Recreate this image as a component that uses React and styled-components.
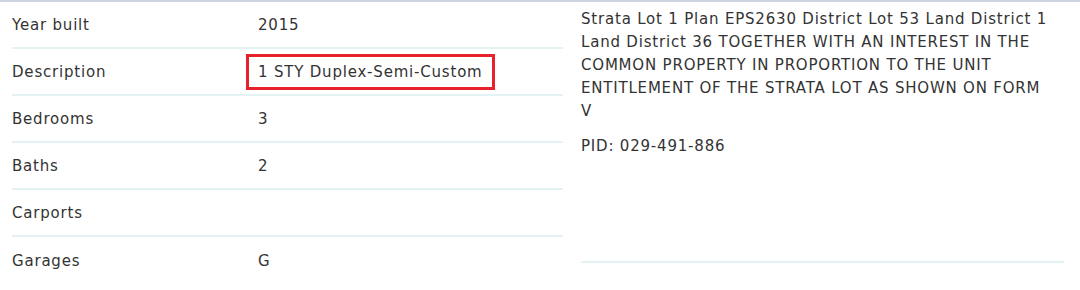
import React from "react";
import styled, { createGlobalStyle } from "styled-components";

const Global = createGlobalStyle`
  html, body {
    margin: 0;
    padding: 0;
    background: #ffffff;
  }
  body {
    font-family: "DejaVu Sans", "Noto Sans", sans-serif;
    color: #333333;
    letter-spacing: 0.8px;
    -webkit-font-smoothing: antialiased;
  }
`;

const Page = styled.div`
  border-top: 2px solid #cdd3de;
  display: grid;
  grid-template-columns: 551px 483px;
  column-gap: 18px;
  padding-left: 12px;
`;

const Table = styled.div`
  display: flex;
  flex-direction: column;
`;

const Row = styled.div`
  display: grid;
  grid-template-columns: 234px 1fr;
  align-items: center;
  height: 47px;
  box-sizing: border-box;
  border-bottom: ${(p) => (p.$last ? "none" : "2px solid #e4f2f4")};
  font-size: 15px;
`;

const Label = styled.div`
  color: #333333;
`;

const Value = styled.div`
  color: #333333;
  padding-left: 12px;
`;

const Highlight = styled.span`
  display: inline-flex;
  align-items: center;
  box-sizing: border-box;
  height: 36px;
  margin-left: -12px;
  padding: 0 9px;
  border: 3px solid #e8212a;
`;

const Legal = styled.div`
  padding-top: 6px;
  display: flex;
  flex-direction: column;
`;

const Para = styled.p`
  margin: 0 0 12px;
  max-width: 468px;
  font-size: 15px;
  line-height: 23px;
  color: #333333;
`;

const Rule = styled.div`
  margin-top: 91px;
  border-bottom: 2px solid #e4f2f4;
`;

const rows = [
  { label: "Year built", value: "2015" },
  { label: "Description", value: "1 STY Duplex-Semi-Custom", highlight: true },
  { label: "Bedrooms", value: "3" },
  { label: "Baths", value: "2" },
  { label: "Carports", value: "" },
  { label: "Garages", value: "G" },
];

export default function App() {
  return (
    <>
      <Global />
      <Page>
        <Table>
          {rows.map((r, i) => (
            <Row key={r.label} $last={i === rows.length - 1}>
              <Label>{r.label}</Label>
              <Value>
                {r.highlight ? <Highlight>{r.value}</Highlight> : r.value}
              </Value>
            </Row>
          ))}
        </Table>
        <Legal>
          <Para>
            Strata Lot 1 Plan EPS2630 District Lot 53 Land District 1 Land
            District 36 TOGETHER WITH AN INTEREST IN THE COMMON PROPERTY IN
            PROPORTION TO THE UNIT ENTITLEMENT OF THE STRATA LOT AS SHOWN ON
            FORM V
          </Para>
          <Para>PID: 029-491-886</Para>
          <Rule />
        </Legal>
      </Page>
    </>
  );
}
